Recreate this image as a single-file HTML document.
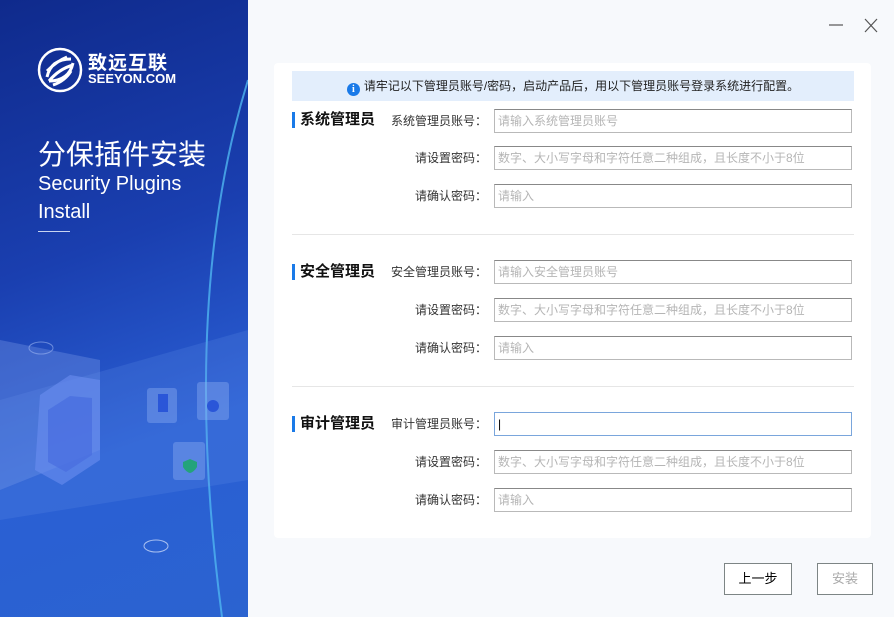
<!DOCTYPE html>
<html><head><meta charset="utf-8"><style>
*{margin:0;padding:0;box-sizing:border-box}
body{width:894px;height:617px;overflow:hidden;background:#f7f9fc;font-family:"Liberation Sans","Noto Sans CJK SC",sans-serif;position:relative}
.left{position:absolute;left:0;top:0;width:248px;height:617px;background:linear-gradient(160deg,#0f2a8c 0%,#1a3fb0 40%,#2a5fd4 70%,#2b63d0 100%);overflow:hidden}
.card{position:absolute;left:274px;top:63px;width:597px;height:475px;background:#fff;border-radius:4px}
.info{position:absolute;left:292px;top:71px;width:562px;height:30px;background:#e3eefc;font-size:12px;color:#222;text-align:center;line-height:30px}
.info i{display:inline-block;width:13px;height:13px;border-radius:50%;background:#1a7ae8;color:#fff;font-size:10px;line-height:13px;font-style:normal;font-weight:bold;vertical-align:-2px;margin-right:4px;font-family:"Liberation Serif",serif}
.title{position:absolute;left:292px;font-size:15px;font-weight:bold;color:#111;padding-left:5px;border-left:3px solid #1a7ae8;line-height:16px}
.lab{position:absolute;width:200px;left:287px;text-align:right;font-size:12px;color:#333;line-height:24px}
.inp{position:absolute;left:494px;width:358px;height:24px;border:1px solid #b9b9b9;border-top-color:#888;font-size:12px;color:#b5b5b5;line-height:22px;padding-left:3px;background:#fff}
.sep{position:absolute;left:292px;width:562px;height:1px;background:#e6e6e6}
.btn{position:absolute;top:563px;height:32px;border:1px solid #7d8585;background:#fff;font-size:13px;text-align:center;line-height:30px}
</style></head><body>
<div class="left">
<svg width="248" height="617" style="position:absolute;left:0;top:0">
<path d="M248 80 Q180 300 222 617" stroke="#4fb5f0" stroke-width="2" fill="none" opacity=".8"/>
<path d="M0 340 L100 360 L100 450 L0 490Z" fill="#7a9ae8" opacity=".35"/>
<path d="M0 400 L248 330 L248 480 L0 520Z" fill="#6a95ea" opacity=".2"/>
<path d="M40 395 L70 375 L100 380 L100 460 L62 485 L35 470 Z" fill="#6b8ef0" opacity=".6"/>
<path d="M48 410 L70 396 L92 398 L92 455 L66 472 L48 462 Z" fill="#4a6fe0" opacity=".8"/>
<ellipse cx="41" cy="348" rx="12" ry="6" fill="none" stroke="#9bb4f0" opacity=".6"/>
<ellipse cx="156" cy="546" rx="12" ry="6" fill="none" stroke="#c6d6f8" opacity=".8"/>
<rect x="147" y="388" width="30" height="35" fill="#8fb0f2" opacity=".4" rx="3"/>
<rect x="197" y="382" width="32" height="38" fill="#8fb0f2" opacity=".4" rx="3"/>
<rect x="173" y="442" width="32" height="38" fill="#8fb0f2" opacity=".4" rx="3"/>
<rect x="158" y="394" width="10" height="18" fill="#2a56d8"/>
<circle cx="213" cy="406" r="6" fill="#2a56d8"/>
<path d="M183 462 l7 -3 7 3 v5 q-3 5 -7 6 q-4 -1 -7 -6z" fill="#23a37a"/>
</svg>
<svg width="46" height="46" viewBox="0 0 46 46" style="position:absolute;left:37px;top:47px"><circle cx="23" cy="23" r="21" fill="none" stroke="#fff" stroke-width="2.5"/><path d="M10 30 Q14 12 34 12 M12 34 Q22 22 36 18 M10 24 Q20 14 30 10 M36 16 Q32 34 12 34 M34 24 Q28 34 16 38" stroke="#fff" stroke-width="3" fill="none"/></svg>
<div style="position:absolute;left:88px;top:48px;color:#fff;font-size:19px;font-weight:bold;letter-spacing:1px">致远互联</div>
<div style="position:absolute;left:88px;top:71px;color:#fff;font-size:13px;font-weight:bold">SEEYON.COM</div>
<div style="position:absolute;left:38px;top:133px;color:#fff;font-size:28px">分保插件安装</div>
<div style="position:absolute;left:38px;top:170px;color:#fff;font-size:20px;line-height:28px">Security Plugins<br>Install</div>
<div style="position:absolute;left:38px;top:231px;width:32px;height:1px;background:#c8d4f0"></div>
</div>
<svg width="60" height="24" style="position:absolute;left:826px;top:14px"><line x1="3" y1="11" x2="17" y2="11" stroke="#555" stroke-width="1.2"/><line x1="39" y1="5" x2="51" y2="18" stroke="#555" stroke-width="1.2"/><line x1="51" y1="5" x2="39" y2="18" stroke="#555" stroke-width="1.2"/></svg>
<div class="card"></div>
<div class="info"><i>i</i>请牢记以下管理员账号/密码，启动产品后，用以下管理员账号登录系统进行配置。</div>

<div class="title" style="top:112px">系统管理员</div>
<div class="lab" style="top:109px">系统管理员账号：</div><div class="inp" style="top:109px">请输入系统管理员账号</div>
<div class="lab" style="top:146px">请设置密码：</div><div class="inp" style="top:146px">数字、大小写字母和字符任意二种组成，且长度不小于8位</div>
<div class="lab" style="top:184px">请确认密码：</div><div class="inp" style="top:184px">请输入</div>
<div class="sep" style="top:234px"></div>

<div class="title" style="top:264px">安全管理员</div>
<div class="lab" style="top:260px">安全管理员账号：</div><div class="inp" style="top:260px">请输入安全管理员账号</div>
<div class="lab" style="top:298px">请设置密码：</div><div class="inp" style="top:298px">数字、大小写字母和字符任意二种组成，且长度不小于8位</div>
<div class="lab" style="top:336px">请确认密码：</div><div class="inp" style="top:336px">请输入</div>
<div class="sep" style="top:386px"></div>

<div class="title" style="top:416px">审计管理员</div>
<div class="lab" style="top:412px">审计管理员账号：</div><div class="inp" style="top:412px;border:1px solid #7aa6dc;color:#000">|</div>
<div class="lab" style="top:450px">请设置密码：</div><div class="inp" style="top:450px">数字、大小写字母和字符任意二种组成，且长度不小于8位</div>
<div class="lab" style="top:488px">请确认密码：</div><div class="inp" style="top:488px">请输入</div>

<div class="btn" style="left:724px;width:68px;color:#000">上一步</div>
<div class="btn" style="left:817px;width:56px;color:#aaa">安装</div>
</body></html>
